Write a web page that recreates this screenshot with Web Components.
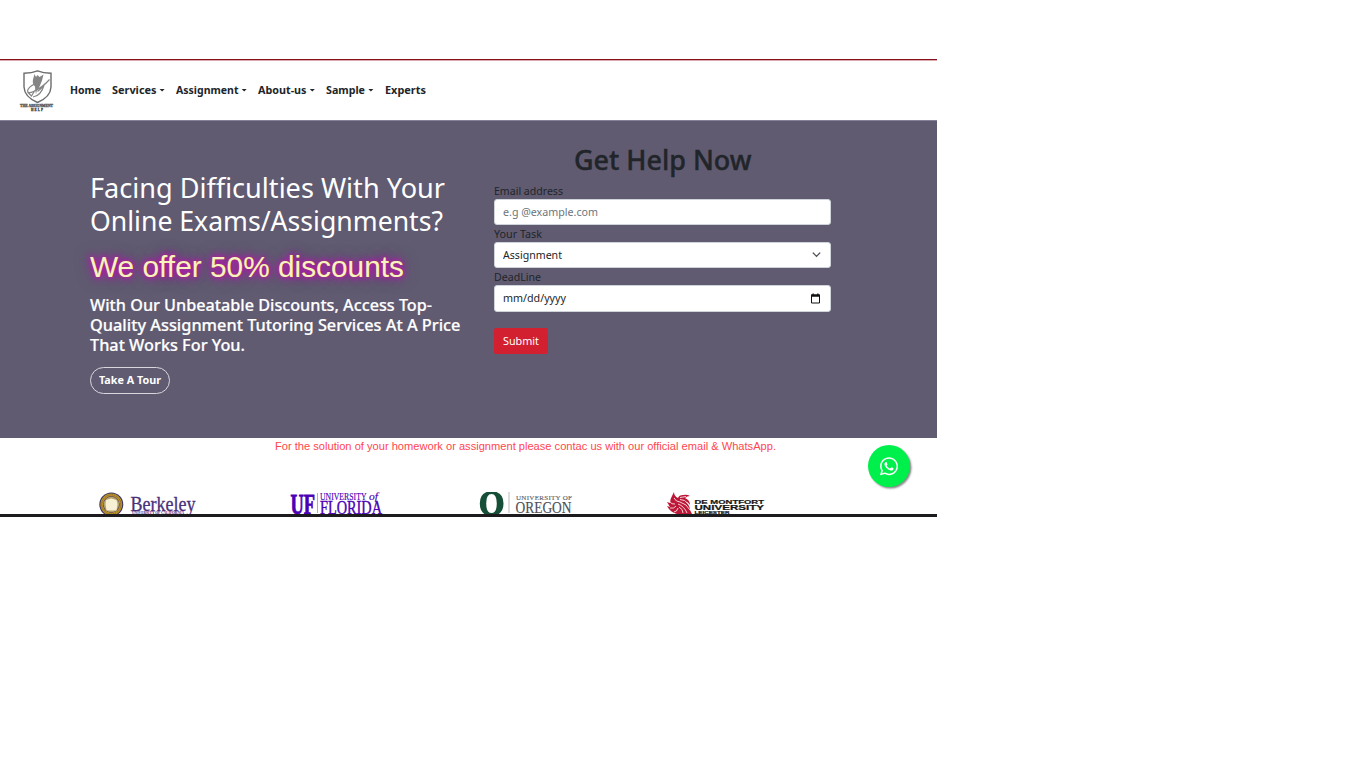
<!DOCTYPE html>
<html lang="en">
<head>
<meta charset="utf-8">
<title>The Assignment Help</title>
<style>
body{margin:0;background:#fff;font-family:"Noto Sans","Open Sans",sans-serif;color:#212529}
</style>
</head>
<body>
<help-page></help-page>
<script>
const define=(name,html,after)=>customElements.define(name,class extends HTMLElement{
  connectedCallback(){
    if(this.shadowRoot)return;
    const t=document.createElement('template');
    t.innerHTML=typeof html==='function'?html(this):html;
    this.attachShadow({mode:'open'}).append(t.content.cloneNode(true));
    if(after)after(this);
  }
});

/* One line of text set to a given measure */
define('fit-text',`<style>:host{display:block;white-space:nowrap}span{display:inline-block;transform-origin:0 50%}</style><span><slot></slot></span>`,el=>{
  const w=parseFloat(el.getAttribute('w')),s=el.shadowRoot.querySelector('span');
  el.style.width=w+'px';
  const n=s.getBoundingClientRect().width;
  if(n)s.style.transform=`scaleX(${w/n})`;
});

define('brand-logo',`<style>:host{display:block;width:36px;height:44px}svg{display:block;overflow:visible}</style>
<svg width="36" height="44" viewBox="0 0 36 44">
<path d="M5 4.200Q13 4 18.500 1.800Q24 4 32 4.200V18Q31.500 28 18.500 33.500Q5.500 28 5 18Z" fill="#fff" stroke="#6c6c6c" stroke-width="1.400"/>
<path d="M15.500 5l1.500 3 1.500-2 2 2 4-2.500-1.500 6-2 5q-1 3-3 4l-1 5q-1-5-1-8-3-3-2-7z" fill="#858585"/>
<path d="M17.500 14Q9 18 8.500 22q.5 3 6 .500Q24 18 30.500 10.500M14 28q8-1 11.500-13-3 5-7 7.500M8.500 23l4 4 3-5" fill="none" stroke="#858585" stroke-width="1.200"/>
<text x="1" y="37.700" font-family="Liberation Serif,serif" font-weight="700" font-size="4.600" textLength="33" lengthAdjust="spacingAndGlyphs" fill="#555" stroke="#555" stroke-width=".4">THE ASSIGNMENT</text>
<text x="12" y="42" font-family="Liberation Serif,serif" font-weight="700" font-size="3.200" textLength="12" fill="#444" stroke="#444" stroke-width=".3">HELP</text>
</svg>`);

define('nav-item',el=>`<style>
:host{display:flex;align-items:center;font-weight:700;font-size:11.200px;line-height:18px;margin-right:10.800px;color:#212529}
i{width:6px;height:3px;background:#212529;clip-path:polygon(0 0,100% 0,50% 100%);margin-left:2.800px}
</style><fit-text w="${el.getAttribute('w')}"><slot></slot></fit-text>${el.hasAttribute('menu')?'<i></i>':''}`);

define('site-nav',`<style>
:host{display:flex;height:61px;box-sizing:border-box;border-top:1px solid #86111d;box-shadow:inset 0 1px #d9a9ae;padding:9px 0 0 19px}
nav{display:flex;margin:12px 0 0 15px;height:18px}
brand-logo{margin-top:-.5px}
</style><brand-logo></brand-logo><nav>
<nav-item w="31">Home</nav-item><nav-item w="44.500" menu>Services</nav-item><nav-item w="62.500" menu>Assignment</nav-item><nav-item w="48.500" menu>About-us</nav-item><nav-item w="39" menu>Sample</nav-item><nav-item w="41">Experts</nav-item></nav>`);

define('hero-pitch',`<style>
:host{display:block;padding-top:51px;color:#fff}
h1,h2,h3{margin:0;font-weight:400}
h1{font-size:26.900px;line-height:33px}
h2{font:30px/36px "Liberation Sans",Arial,sans-serif;color:#f7f2c4;margin-top:12px;text-shadow:0 0 1px #a5640a,0 0 4px #b319b3,0 0 6px #b814b8,0 0 9px #b119b1,0 0 16px #a11ba180}
h3{font-size:16.300px;line-height:19.800px;margin-top:11px;font-weight:500;-webkit-text-stroke:.2px #fff}
button{display:flex;align-items:center;justify-content:center;margin:11.600px 0 0;width:80px;height:27px;border:1px solid #d9d7de;border-radius:14px;background:none;color:#fff;padding:0;font:700 11.200px/18px "Noto Sans",sans-serif}
</style>
<h1><fit-text w="355">Facing Difficulties With Your</fit-text><fit-text w="353">Online Exams/Assignments?</fit-text></h1>
<h2><fit-text w="314">We offer 50% discounts</fit-text></h2>
<h3><fit-text w="342">With Our Unbeatable Discounts, Access Top-</fit-text><fit-text w="370.500">Quality Assignment Tutoring Services At A Price</fit-text><fit-text w="155">That Works For You.</fit-text></h3>
<button><fit-text w="62">Take A Tour</fit-text></button>`);

define('form-field',el=>`<style>
:host{display:block}
label{display:block;font-size:11.600px;line-height:17px;height:17px;color:#212529}
div{box-sizing:border-box;height:26.200px;background:#fff;border:1px solid #ced4da;border-radius:3px;display:flex;align-items:center;justify-content:space-between;padding:0 9px 0 8px;font-size:11.600px;line-height:18px;color:var(--value,#212529)}
</style><label><fit-text w="${el.getAttribute('lw')}">${el.getAttribute('label')}</fit-text></label>
<div><fit-text w="${el.getAttribute('w')}">${el.getAttribute('value')}</fit-text><slot></slot></div>`);

define('help-form',`<style>
:host{display:block;padding-top:22px;width:337px}
h2{margin:0 0 0 79.500px;font-size:27.500px;line-height:34px;font-weight:500;-webkit-text-stroke:.4px #212529;height:40px;padding-top:1px;box-sizing:border-box;color:#212529}
button{display:flex;align-items:center;justify-content:center;margin:16.300px 0 0;width:53.500px;height:26.500px;border:0;border-radius:2px;background:#d22030;color:#fff;padding:0;font:11.600px/18px "Noto Sans",sans-serif}
svg{display:block}
</style>
<h2><fit-text w="177.500">Get Help Now</fit-text></h2>
<form-field label="Email address" lw="69" value="e.g @example.com" w="95" style="--value:#6c757d"></form-field>
<form-field label="Your Task" lw="48" value="Assignment" w="59"><svg width="9" height="6" viewBox="0 0 9 6"><path d="M1.200 1l3.300 3.300L7.800 1" fill="none" stroke="#4c5157" stroke-width="1.200" stroke-linecap="round"/></svg></form-field>
<form-field label="DeadLine" lw="47" value="mm/dd/yyyy" w="63"><svg width="11" height="11" viewBox="0 0 11 11"><path d="M1.500 2h8v8h-8z" fill="none" stroke="#111"/><path d="M1 1.500h9v2.300H1zM2.500 .5h1.300v2H2.500zM7.200 .5h1.300v2H7.200z" fill="#111"/></svg></form-field>
<button><fit-text w="36">Submit</fit-text></button>`);

define('hero-banner',`<style>:host{display:grid;grid-template-columns:404px 337px;padding-left:90px;height:318px;background:#605b71;box-shadow:inset 0 1px #85819a}</style>
<hero-pitch></hero-pitch><help-form></help-form>`);

define('contact-note',`<style>:host{display:flex;padding-left:275px;height:16px;font:11.400px/16px "Liberation Sans",Arial,sans-serif;color:#ff464e}</style>
<fit-text w="501">For the solution of your homework or assignment please contac us with our official email &amp; WhatsApp.</fit-text>`);

define('partner-strip',`<style>
:host{display:grid;grid-template-columns:191px 190px 187px 110px;padding:37px 0 0 98px;height:60px;box-sizing:border-box}
svg{display:block;overflow:visible}
.s{font-family:"Liberation Serif",serif}
</style>
<svg width="100" height="24" viewBox="0 0 100 24"><circle cx="13.300" cy="13.500" r="12" fill="#3c3560"/><circle cx="13.300" cy="13.500" r="9.600" fill="none" stroke="#c0932a" stroke-width="2.600"/><circle cx="13.300" cy="13.500" r="9.600" fill="none" stroke="#75602c" stroke-width="1" stroke-dasharray="1 1"/><circle cx="13.300" cy="13.500" r="7.800" fill="#b5a36b"/><path d="M8 9l5.300-1.500L18.500 9l1 4-1 6.500H8.500l-1-6.500z" fill="#f8f0d4"/>
<text class="s" x="32.500" y="19.500" font-size="20" textLength="65" lengthAdjust="spacingAndGlyphs" fill="#49307a" stroke="#49307a" stroke-width=".3">Berkeley</text><text class="s" x="34" y="23" font-size="3.600" font-weight="700" textLength="52" lengthAdjust="spacingAndGlyphs" fill="#4b257f">UNIVERSITY OF CALIFORNIA</text></svg>
<svg width="100" height="24" viewBox="0 0 100 24"><text class="s" x="1.500" y="22.800" font-size="29" font-weight="700" textLength="24.500" lengthAdjust="spacingAndGlyphs" fill="#4b00b5" stroke="#4b00b5" stroke-width=".9">UF</text><path d="M28.500 2v20" stroke="#ef9a78"/><text class="s" x="31" y="9.300" font-size="9.500" textLength="46.500" lengthAdjust="spacingAndGlyphs" fill="#4b00b5" stroke="#4b00b5" stroke-width=".15">UNIVERSITY</text><text class="s" x="80" y="9.300" font-size="10" font-style="italic" textLength="9" lengthAdjust="spacingAndGlyphs" fill="#4b00b5" stroke="#4b00b5" stroke-width=".15">of</text><text class="s" x="31" y="23" font-size="18.500" textLength="62" lengthAdjust="spacingAndGlyphs" fill="#4b00b5" stroke="#4b00b5" stroke-width=".4">FLORIDA</text></svg>
<svg width="100" height="24" viewBox="0 0 100 24"><path fill-rule="evenodd" d="M7.500 1h10q7 2.500 7 11.500t-7 11.500h-10Q.800 21.500.800 12.500T7.500 1zM12.500 3q-5.300 0-5.300 9.500t5.300 9.500 5.300-9.500-5.300-9.500z" fill="#154f37"/><path d="M30 1v21" stroke="#bbb"/><text class="s" x="37" y="8.500" font-size="7" textLength="56" fill="#60646a" stroke="#60646a" stroke-width=".15">UNIVERSITY OF</text><text class="s" x="36.500" y="22.200" font-size="16.500" textLength="56" lengthAdjust="spacingAndGlyphs" fill="#4c5057" stroke="#4c5057" stroke-width=".15">OREGON</text></svg>
<svg width="102" height="24" viewBox="0 0 102 24"><path d="M8 1q0 4 4 6 1-3 5-3 4-1 7 1-3 0-5 2 5 2 5 7-2-3-4-3 4 4 4 8 1 2 2 4H11Q4 21 1 15l3 1-3-5 3 1q0-4 2-7 1-2 2-4z" fill="#bd1738"/><path d="M3 10q3 4 6 3M4 17q4 1 6-2M8 21q3 0 4-4M8 7q2 4 6 4 7 2 10 8M12 13q6 2 9 9M13 16q4 2 4 6M14 8.500q5 0 8 4M14 6.500l6-1" fill="none" stroke="#fff" stroke-width=".8"/><g font-family="Liberation Sans,sans-serif" font-weight="700" fill="#171717" stroke="#171717" stroke-width=".2"><text x="28.500" y="13" font-size="6.200" textLength="69.500" lengthAdjust="spacingAndGlyphs">DE MONTFORT</text><text x="28.500" y="18.700" font-size="6.800" textLength="69.500" lengthAdjust="spacingAndGlyphs">UNIVERSITY</text><text x="28.500" y="22.700" font-size="4.200" textLength="35" lengthAdjust="spacingAndGlyphs">LEICESTER</text></g></svg>`);

define('chat-button',`<style>:host{display:flex;align-items:center;justify-content:center;width:42px;height:42px;border-radius:50%;background:#00f04b;box-shadow:1.500px 1.500px 2px #888}</style>
<svg width="18" height="20.600" viewBox="0 0 448 512" fill="#fff"><path d="M380.900 97.100C339 55.100 283.200 32 223.900 32c-122.400 0-222 99.600-222 222 0 39.100 10.200 77.300 29.600 111L0 480l117.700-30.900c32.400 17.700 68.900 27 106.100 27h.1c122.300 0 224.100-99.600 224.100-222 0-59.300-25.200-115-67.100-157zm-157 341.600c-33.200 0-65.700-8.900-94-25.700l-6.700-4-69.800 18.300L72 359.200l-4.400-7c-18.500-29.400-28.200-63.300-28.200-98.200 0-101.700 82.800-184.500 184.600-184.500 49.300 0 95.600 19.200 130.400 54.100 34.800 34.900 56.200 81.200 56.100 130.500 0 101.800-84.900 184.600-186.600 184.600zm101.200-138.200c-5.500-2.800-32.800-16.200-37.900-18-5.100-1.900-8.800-2.800-12.500 2.800-3.700 5.600-14.300 18-17.600 21.800-3.200 3.700-6.500 4.200-12 1.400-32.600-16.300-54-29.100-75.500-66-5.700-9.800 5.700-9.100 16.300-30.300 1.800-3.700.9-6.900-.5-9.700-1.400-2.800-12.500-30.100-17.100-41.200-4.500-10.800-9.100-9.300-12.500-9.500-3.200-.2-6.900-.2-10.600-.2-3.700 0-9.700 1.400-14.800 6.900-5.100 5.600-19.400 19-19.400 46.300 0 27.300 19.900 53.700 22.600 57.400 2.800 3.700 39.100 59.700 94.800 83.800 35.200 15.200 49 16.500 66.600 13.900 10.700-1.600 32.800-13.400 37.400-26.400 4.600-13 4.600-24.100 3.200-26.400-1.300-2.500-5-3.900-10.500-6.600z"/></svg>`);

define('help-page',`<style>
:host{display:block;width:937px;height:768px;padding-top:59px;box-sizing:border-box;position:relative}
footer{height:3px;background:#1c1c1f;position:relative}
chat-button{position:absolute;left:868px;top:445px}
</style>
<site-nav></site-nav><hero-banner></hero-banner><contact-note></contact-note><partner-strip></partner-strip><footer></footer><chat-button></chat-button>`);
</script>
</body>
</html>
